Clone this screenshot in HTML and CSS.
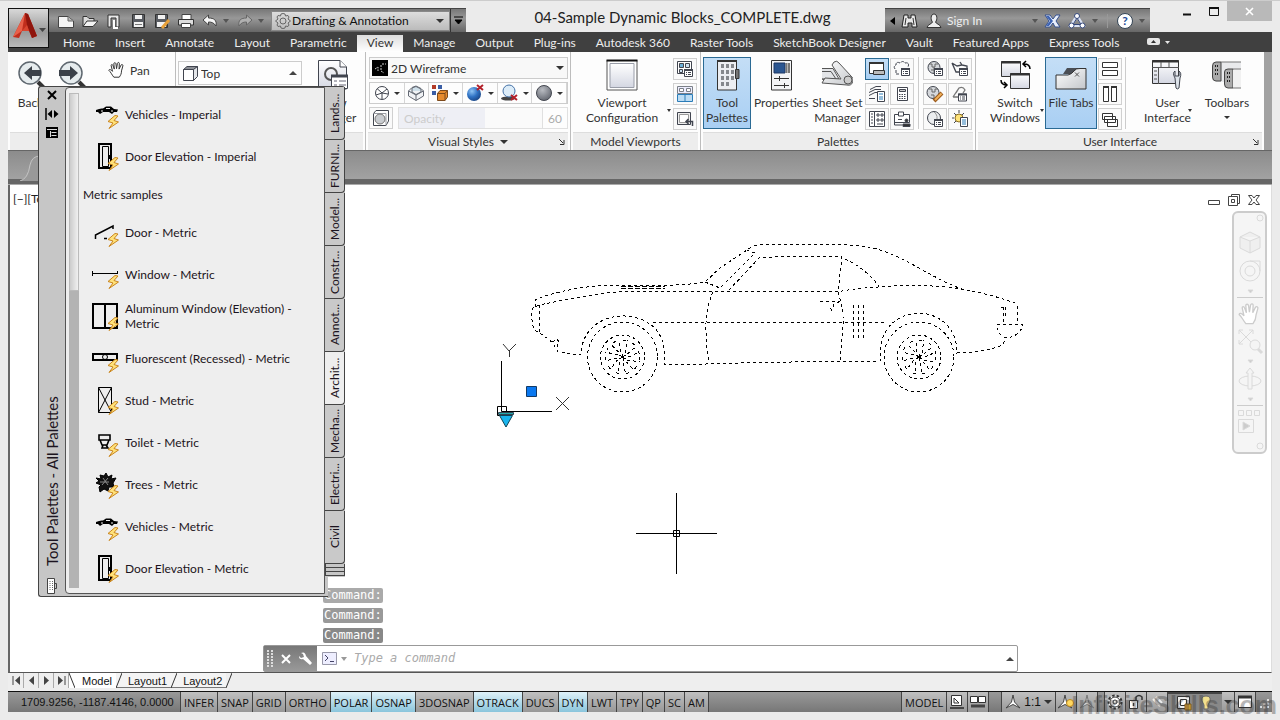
FILE: index.html
```html
<!DOCTYPE html>
<html lang="en">
<head>
<meta charset="utf-8">
<title>04-Sample Dynamic Blocks_COMPLETE.dwg</title>
<link rel="stylesheet" href="styles.css">
</head>
<body>
<svg class="defs" aria-hidden="true">
  <defs>
    <linearGradient id="steel" x1="0" y1="0" x2="1" y2="1"><stop offset="0" stop-color="#fff"/><stop offset="1" stop-color="#c3c6ca"/></linearGradient>
    <linearGradient id="pane" x1="0" y1="0" x2="0" y2="1"><stop offset="0" stop-color="#fff"/><stop offset="1" stop-color="#d4d7e2"/></linearGradient>
    <radialGradient id="blueball" cx=".35" cy=".3" r=".8"><stop offset="0" stop-color="#8fc4f5"/><stop offset=".5" stop-color="#2f72c4"/><stop offset="1" stop-color="#173f7d"/></radialGradient>
    <radialGradient id="grayball" cx=".4" cy=".3" r=".8"><stop offset="0" stop-color="#b9bcc2"/><stop offset="1" stop-color="#5b5f68"/></radialGradient>
    <symbol id="bolt" viewBox="0 0 12 14"><path d="M8 .5 1 6.500 6 8 2 13.500 11.500 7 7 5.500 11 1Z" fill="#ffe27a" stroke="#c9841c"/></symbol>
    <symbol id="car" viewBox="0 0 28 30"><path d="M5 11Q9 9 12 9.500L15 7.500H20L23 10 27 10.500 26 13H23L21 15 18 13H12L9 15 7 13H5Z" fill="#000"/><path d="M15 9.500h4M10 12h2M20 12h2" stroke="#eee"/></symbol>
    <symbol id="door" viewBox="0 0 28 30"><path d="M8 3H20V27H8Z" fill="none" stroke="#000" stroke-width="2"/><path d="M11.500 5.500H17.500V25.500H11.500Z" fill="none" stroke="#000"/><path d="M19 14v4" stroke="#000" stroke-width="2"/></symbol>
    <symbol id="list" viewBox="0 0 9 8"><path d="M.5.5H8.500V7.500H.5Z" fill="#fff" stroke="#41454f"/><path d="M0 1h9" stroke="#41454f" stroke-width="2"/><path d="M2 3.500h1M4 3.500h3M2 5.500h1M4 5.500h3" stroke="#41454f"/></symbol>
    <symbol id="hand" viewBox="0 0 20 20"><path d="M6.500 18C4 15 3 12 1 10.500 1 9 3 9 5 11.500L3.500 5C3.500 3.500 5 3.500 5.500 5L7 9 6.500 3C6.500 1.500 8.500 1.500 8.800 3L9.500 8.500 10.500 2.500C11 1 12.800 1.500 12.600 3L12.300 9 14.500 4.500C15.300 3.300 17 4 16.500 5.500L15 11C15 14 14 16 12.500 18Z" fill="#fff" stroke="currentColor" stroke-width="1.100"/></symbol>
  </defs>
</svg>
<div class="app">
  <header class="top">
    <button class="app-menu" aria-label="Application menu">
      <svg width="34" height="34" viewBox="0 0 34 34"><path d="M12 2 0 26 6 27 9 20H16L19 27 24 25 15 3Z" fill="#c12d1c"/><path d="M12 2 9 20 0 26Z" fill="#e8604a"/><path d="M12 2 15 3 24 25 19 27 14 14Z" fill="#8f150d"/><path d="M9 20H16L14 14Z" fill="#d84630"/><path d="M26 17h7l-3.500 4Z" fill="#444"/></svg>
    </button>
    <div class="title-row">
      <div class="qat">
        <button aria-label="New"><svg width="18" height="18"><path d="M1.500 4.500H11L16.500 9V15.500H1.500Z" fill="#f4f4f4" stroke="#444"/><path d="M11 4.500V9H16" fill="#bbb" stroke="#666"/></svg></button>
        <button aria-label="Open"><svg width="18" height="18"><path d="M2 14.500V4.500H6L8 6.500H13V9" fill="#ddd" stroke="#333"/><path d="M2 14.500 6 9H17L12 14.500Z" fill="#f3f3f3" stroke="#333"/></svg></button>
        <button aria-label="Recover"><svg width="18" height="18"><path d="M3 15V3H14V15H11V6H6V15Z" fill="#e8e8e8" stroke="#333"/><path d="M9 8v8h4" stroke="#fff" stroke-width="2" fill="none"/></svg></button>
        <button aria-label="Save"><svg width="18" height="18"><path d="M3.500 2.500H15.500V15.500H3.500Z" fill="#5a5d63" stroke="#333"/><path d="M6 3h7v4H6ZM5 10h9v5H5Z" fill="#f2f2f2"/><path d="M6 12.500h7" stroke="#777"/></svg></button>
        <button aria-label="Save as"><svg width="18" height="18"><path d="M2.500 2.500H14.500V15.500H2.500Z" fill="#5a5d63" stroke="#333"/><path d="M5 3h7v4H5ZM4 10h9v5H4Z" fill="#f2f2f2"/><path d="M9 16 16 8" stroke="#e8a13a" stroke-width="3"/></svg></button>
        <button aria-label="Plot"><svg width="18" height="18"><path d="M5 2.500H14V8H5Z" fill="#fff" stroke="#444"/><path d="M1.500 7.500H16.500V13H1.500Z" fill="#ddd" stroke="#333"/><path d="M4.500 11.500H13.500V15.500H4.500Z" fill="#fff" stroke="#444"/></svg></button>
        <button aria-label="Undo"><svg width="18" height="18"><path d="M2 8 7.500 3V6C13 6 16 8 15 14 13 11 11 10 7.500 10V13Z" fill="#f5f5f5" stroke="#444"/></svg></button><i class="tri dim"></i>
        <button aria-label="Redo"><svg width="18" height="18"><path d="M16 8 10.500 3V6C5 6 2 8 3 14 5 11 7 10 10.500 10V13Z" fill="#b0b0b0" stroke="#666"/></svg></button><i class="tri dim"></i>
        <label class="workspace"><svg width="18" height="18" fill="none" stroke="#666"><path d="M9 1.500 11 2 11.500 4 14 3.500 15 5 14 7 16.500 9 14 11 15 13 14 14.500 11.500 14 11 16 9 16.500 7 16 6.500 14 4 14.500 3 13 4 11 1.500 9 4 7 3 5 4 3.500 6.500 4 7 2Z"/><circle cx="9" cy="9" r="3"/></svg>
          <select aria-label="Workspace"><option>Drafting &amp; Annotation</option></select><i class="tri"></i></label>
        <button class="qat-more" aria-label="Customize"><svg width="9" height="9"><path d="M0 1h9M1 4h7L4.500 8Z" stroke="#000" fill="#000"/></svg></button>
      </div>
      <h1 class="title">04-Sample Dynamic Blocks_COMPLETE.dwg</h1>
      <div class="infobar">
        <svg width="5" height="8"><path d="M5 0V8L0 4Z"/></svg>
        <button aria-label="Search"><svg width="18" height="18"><path d="M3 3h4v3h3V3h4l2 12h-5v-4H7v4H1Z" fill="#e8e8e8" stroke="#222"/><path d="M5 6 4 13M12 6l1 7" stroke="#333"/></svg></button>
        <button class="signin"><svg width="18" height="18"><path d="M9 2C5.500 2 5.500 8 7.500 10 7 12 3 12 2 15.500H16C15 12 11 12 10.500 10 12.500 8 12.500 2 9 2Z" fill="#eee" stroke="#333"/></svg><span>Sign In</span></button>
        <i class="tri dim"></i>
        <button aria-label="Exchange"><svg width="18" height="16"><path d="M1 2H6L9 6 12 2H16L12 8 16 14H11L9 10 6 14H1L5 8Z" fill="#e9effa" stroke="#35508e"/><path d="M2 3h3l4 5-4 5H2l4-5Z" fill="#3d63b4"/></svg></button>
        <button aria-label="Autodesk 360"><svg width="18" height="16" fill="none" stroke="#34477a"><path d="M9 3 3 12.500H15Z" stroke="#dbe3f4" stroke-width="3"/><path d="M9 5 5 11.500H13Z"/><circle cx="9" cy="3" r="2.500" fill="#fff"/><circle cx="3.500" cy="12.500" r="2.500" fill="#fff"/><circle cx="14.500" cy="12.500" r="2.500" fill="#fff"/></svg></button><i class="tri dim"></i>
        <span class="bar"></span>
        <button class="help" aria-label="Help">?</button><i class="tri dim"></i>
      </div>
      <div class="winbtns">
        <button aria-label="Minimize"><svg width="10" height="12"><path d="M1 9.500h8" stroke="#111" stroke-width="2"/></svg></button>
        <button aria-label="Maximize"><svg width="12" height="12"><path d="M1 2.500H10.500V10.500H1.500V2" fill="none" stroke="#111"/><path d="M1 3h10" stroke="#111" stroke-width="2"/></svg></button>
        <button class="close" aria-label="Close"><svg width="9" height="9"><path d="M1 1 8 8M8 1 1 8" stroke="#fff" stroke-width="1.600"/></svg></button>
      </div>
    </div>
    <nav class="tabs">
      <a href="#">Home</a><a href="#">Insert</a><a href="#">Annotate</a><a href="#">Layout</a><a href="#">Parametric</a><a href="#" class="on">View</a><a href="#">Manage</a><a href="#">Output</a><a href="#">Plug-ins</a><a href="#">Autodesk 360</a><a href="#">Raster Tools</a><a href="#">SketchBook Designer</a><a href="#">Vault</a><a href="#">Featured Apps</a><a href="#">Express Tools</a>
      <button class="ribbon-min" aria-label="Minimize ribbon"><svg width="23" height="8"><rect width="13" height="7" rx="2" fill="#e6e6e6"/><path d="M4 5h5L6.500 2Z" fill="#333"/><path d="M18 3h5l-2.500 3Z" fill="#e6e6e6"/></svg></button>
    </nav>
  </header>

  <section class="ribbon">
    <div class="panel p-nav">
      <div class="content">
        <button class="big"><svg width="32" height="32"><circle cx="15" cy="14" r="11" fill="#e6ecee" stroke="#5f6870" stroke-width="1.500"/><path d="M23 23l7 7" stroke="#333" stroke-width="4"/><path d="M9 14l8-7v4h9v6h-9v4Z" fill="#3b4149"/></svg><span>Back</span></button>
        <button class="big"><svg width="32" height="32"><circle cx="15" cy="14" r="11" fill="#e6ecee" stroke="#5f6870" stroke-width="1.500"/><path d="M23 23l7 7" stroke="#333" stroke-width="4"/><path d="M22 14l-8-7v4H3v6h11v4Z" fill="#3b4149"/></svg><span>Forward</span></button>
        <button class="pan"><svg width="18" height="18"><use href="#hand"/></svg>Pan</button>
      </div>
      <div class="caption">Navigate 2D</div>
    </div>
    <div class="panel p-views">
      <div class="content">
        <label class="viewlist"><svg width="18" height="18" fill="#fff" stroke="#41454f"><path d="M2.500 5.500H12.500V16.500H2.500Z"/><path d="M2.500 5.500 6 2.500H16.500L12.500 5.500Z" fill="#8d9096"/><path d="M12.500 5.500 16.500 2.500V12.500L12.500 16.500Z" fill="#e3e5e8"/></svg>
          <select aria-label="View"><option>Top</option></select><i class="tri up"></i></label>
        <button class="big viewmgr"><svg width="32" height="32"><path d="M1.500 1.500H23L29.500 8V30H1.500Z" fill="url(#pane)" stroke="#41454f"/><path d="M23 1.500V8H29.500" fill="#fff" stroke="#41454f"/><circle cx="14" cy="15" r="6" fill="none" stroke="#555" stroke-width="2"/><path d="M14.500 16.500H30.500V29.500H14.500Z" fill="#fff" stroke="#41454f"/><path d="M14 17h17" stroke="#41454f" stroke-width="3"/><path d="M17 22h3M22 22h7M17 26h3M22 26h7" stroke="#667"/></svg><span>View<br>Manager</span></button>
      </div>
      <div class="caption">Views</div>
    </div>
    <div class="panel p-styles">
      <div class="content stack">
        <label class="combo"><svg width="16" height="16"><path d="M0 0h16v16H0Z"/><path d="M3 9l3-2v4M10 4h4M9 5v6l3 2" stroke="#ccc" fill="none" stroke-dasharray="2 1"/></svg>
          <select aria-label="Visual style"><option>2D Wireframe</option></select><i class="tri"></i></label>
        <div class="tools">
          <button class="dd" aria-label="Edges"><svg width="16" height="16" fill="none" stroke="#41454f"><circle cx="8" cy="8" r="6.500" fill="#fff"/><path d="M8 8 3 3.500M8 8 13 4M8 8V14M8 8 14 9M8 8 2 10"/></svg><i class="tri"></i></button>
          <button aria-label="X-ray"><svg width="18" height="18"><path d="M1.500 7 5 3.500 9 2 14 4.500 16.500 7V12L9 16.500 1.500 12Z" fill="#f0f2f5" stroke="#656a74"/><path d="M1.500 7 9 11 16.500 7M9 11v5.500M5 7V4L9 2.500 14 5V8L9 10.500 5 8Z" fill="#cfe0ea" stroke="#656a74"/></svg></button>
          <button class="dd" aria-label="Materials"><svg width="18" height="18"><path d="M1 1h4v4H1Z" fill="#b33b28"/><path d="M7 1h4v4H7Z" fill="#3b5ea5"/><path d="M1 7h4v4H1Z" fill="#3b5ea5"/><path d="M6.500 9.500 9 6.500H16.500V13L14 16.500H6.500Z" fill="#e78b2e" stroke="#7d4a1c"/><path d="M14 16.500V9.500H6.500M14 9.500 16.500 6.500" stroke="#7d4a1c" fill="none"/></svg><i class="tri"></i></button>
          <button class="dd" aria-label="Lighting"><svg width="18" height="18"><circle cx="8" cy="10" r="7" fill="url(#blueball)"/><path d="M11 1l6 5M17 1l-6 5" stroke="#b3202a" stroke-width="2"/></svg><i class="tri"></i></button>
          <button class="dd" aria-label="Shadows"><svg width="18" height="18"><ellipse cx="7" cy="14.500" rx="7" ry="2" fill="#444"/><circle cx="8" cy="7" r="6" fill="#dcecf8" stroke="#4572a8"/><path d="M10 11l6 5M16 11l-6 5" stroke="#b3202a" stroke-width="2"/></svg><i class="tri"></i></button>
          <button class="dd" aria-label="Face style"><svg width="18" height="18"><circle cx="9" cy="9" r="7.500" fill="url(#grayball)" stroke="#454851"/></svg><i class="tri"></i></button>
        </div>
        <div class="opacity">
          <button class="sq" aria-label="X-ray faces"><svg width="18" height="18"><path d="M1.500 4.500 4 1.500H16.500V12L14 16.500H1.500Z" fill="#fff" stroke="#41454f"/><path d="M1.500 4.500H14V16.500" fill="none" stroke="#9a9da4"/><circle cx="8" cy="10" r="5" fill="#c9ccd0" stroke="#777"/></svg></button>
          <label class="slider"><span>Opacity</span><input type="range" value="60" disabled></label>
          <input class="num" type="text" value="60" aria-label="Opacity value" disabled>
        </div>
      </div>
      <div class="caption">Visual Styles <i class="tri"></i><svg class="launch" width="6" height="6"><path d="M0 0 4 4M5 1V5.500H1" stroke="#333" fill="none"/></svg></div>
    </div>
    <div class="panel p-vports">
      <div class="content">
        <button class="big w96"><svg width="32" height="32"><path d="M1 1.500H31V31H1Z" fill="#fff" stroke="#555"/><path d="M.5 1.500h31" stroke="#111" stroke-width="2"/><path d="M4 4.500H28V28.500H4Z" fill="url(#pane)" stroke="#999da8"/></svg><span>Viewport<br>Configuration</span><i class="tri corner"></i></button>
        <div class="col3">
          <button class="sq" aria-label="Named"><svg width="18" height="18" fill="#cfe3f2" stroke="#41454f"><path d="M1.500 1.500H15.500V13.500H1.500Z" fill="#fff"/><path d="M3.500 3.500H7.500V7.500H3.500Z" fill="#6bb0d8"/><path d="M9.500 3.500H13.500V7.500H9.500ZM3.500 9.500H6.500V12.500H3.500Z"/><use href="#list" x="8" y="9" width="9" height="8"/></svg></button>
          <button class="sq" aria-label="Join"><svg width="18" height="18" fill="#bcdcf3" stroke="#7b8088"><path d="M1.500 1.500H16.500V8.500H1.500Z" fill="#eef"/><path d="M3.500 3.500H7.500V6.500H3.500ZM10.500 3.500H14.500V6.500H10.500Z" fill="#fff"/><path d="M1.500 9.500H16.500V16.500H1.500Z" stroke="#2b7cb8"/><path d="M9 9v8" stroke="#2b7cb8"/></svg></button>
          <button class="sq" aria-label="Restore"><svg width="18" height="18" fill="#eee" stroke="#41454f"><path d="M1.500 2.500H14.500V14.500H1.500Z"/><path d="M3.500 4.500H12.500V12.500H3.500Z" fill="#fff" stroke="#999"/><path d="M16.500 16V11.500H10M12.500 9 10 11.500 12.500 14" fill="none" stroke-width="1.500"/></svg></button>
        </div>
      </div>
      <div class="caption">Model Viewports</div>
    </div>
    <div class="panel p-palettes">
      <div class="content">
        <button class="big on"><svg width="32" height="32"><path d="M6.500 1.500H25.500V31H6.500Z" fill="#eceef2" stroke="#333"/><path d="M6 2h20" stroke="#333" stroke-width="2"/><path d="M24.500 10.500H28V19.500H24.500Z" fill="#777" stroke="#333"/><path d="M10 5h3v4h-3zM15 5h3v4h-3zM20 5h3v4h-3zM10 11h3v4h-3zM15 11h3v4h-3zM20 11h3v4h-3zM10 17h3v4h-3zM15 17h3v4h-3zM20 17h3v4h-3zM10 23h3v4h-3zM15 23h3v4h-3z" fill="#85888d"/></svg><span>Tool<br>Palettes</span></button>
        <button class="big"><svg width="32" height="32"><path d="M6.500 1.500H26.500V31H6.500Z" fill="#f3f4f6" stroke="#333"/><path d="M9 4h11v10H9Z" fill="#2b5691" stroke="#1c3765"/><path d="M21.500 4v10M24 4v10" stroke="#777" stroke-width="2"/><path d="M9 19.500h15M9 26.500h15M14.500 17v5M19.500 24v5" stroke="#333"/></svg><span>Properties</span></button>
        <button class="big sheets"><svg width="32" height="32"><path d="M1 9.500H12L18 20H1M1 12.500H10L15 20M1 20 16 24" fill="#e3e5e8" stroke="#555"/><path d="M13 3Q16 1 18 4L30 17A5 5 0 0 1 26 26L1 24 4 19 20 20 11 6Z" fill="url(#steel)" stroke="#555"/><circle cx="27" cy="21" r="4" fill="#ccc" stroke="#555"/></svg><span>Sheet Set<br>Manager</span></button>
        <div class="col3 two">
          <button class="sq on" aria-label="Command line"><svg width="18" height="18" fill="#fff" stroke="#333"><path d="M1.500 2.500H15.500V13.500H1.500Z"/><path d="M1 3h15" stroke-width="2"/><path d="M5.500 10.500H16.500V14.500H5.500Z" fill="#bbb"/></svg></button>
          <button class="sq" aria-label="Markup"><svg width="18" height="18" fill="none" stroke="#41454f"><path d="M2 9Q0 6 3 5 3 1 7 3 10 0 12 3 17 2 15 7M3 10v4h4" stroke-dasharray="3 1"/><use href="#list" x="8" y="8" width="9" height="8"/></svg></button>
          <button class="sq" aria-label="Layers"><svg width="18" height="18" fill="#fff" stroke="#41454f"><path d="M1 10.500 7 7.500H13M1 7.500 7 4.500H13M1 13.500H7M2 4.500 8 1.500H13" fill="none"/><path d="M9.500 6.500H16.500V16.500H9.500Z"/><path d="M11 9h4M11 12h4M11 14h4" stroke="#2b7cb8"/></svg></button>
          <button class="sq" aria-label="Calculator"><svg width="18" height="18" fill="#fff" stroke="#41454f"><path d="M4.500 2.500H14.500V15.500H4.500Z"/><path d="M6.500 4.500H12.500V6.500H6.500Z" fill="#ccc"/><path d="M6 9.500h7M6 11.500h7M6 13.500h7" stroke-dasharray="1.500 1"/></svg></button>
          <button class="sq" aria-label="DesignCenter"><svg width="18" height="18" fill="#fff" stroke="#41454f"><path d="M1.500 1.500H6.500V16.500H1.500ZM6.500 1.500H16.500V16.500H6.500Z"/><path d="M9 4h2v2H9ZM13 4h2v2h-2ZM9 9h2v2H9ZM13 9h2v2h-2Z"/><path d="M3 4h2M3 7h2M3 10h2M3 13h2M9 14h6"/></svg></button>
          <button class="sq" aria-label="Share"><svg width="18" height="18" fill="#fff" stroke="#41454f"><path d="M1.500 4.500H16.500V12.500H1.500Z"/><path d="M5.500 4V2H10.500V6H5.500ZM5 9.500h4" /><path d="M1.500 9v6h8" fill="none"/><circle cx="13.500" cy="10.500" r="1.500" fill="#333"/><path d="M10 16.500V14h7v2.500Z" fill="#333"/></svg></button>
        </div>
        <span class="sep"></span>
        <div class="col3 two">
          <button class="sq" aria-label="Materials browser"><svg width="18" height="18"><circle cx="8" cy="7.500" r="6" fill="#d5d8dc" stroke="#41454f"/><path d="M3 4h3v3h3V4h3M5 10h3v3M8 7v3h4" stroke="#666" fill="none"/><use href="#list" x="8" y="8" width="9" height="8"/></svg></button>
          <button class="sq" aria-label="Light glyph"><svg width="18" height="18"><path d="M1 3 5 12H9M1 3l5 3 5-1L9 2M11 5l5 1v3" fill="none" stroke="#41454f" stroke-width="1.300"/><use href="#list" x="8" y="8" width="9" height="8"/></svg></button>
          <button class="sq" aria-label="Materials editor"><svg width="18" height="18"><circle cx="7" cy="7.500" r="6" fill="#d5d8dc" stroke="#41454f"/><path d="M3 4h3v3h3V4h3M5 10h3v3" stroke="#666" fill="none"/><path d="M8 16 16 8" stroke="#9c5b1d" stroke-width="4"/><path d="M9 15 15.500 8.500" stroke="#f0b05a" stroke-width="2"/></svg></button>
          <button class="sq" aria-label="Visual styles manager"><svg width="18" height="18"><path d="M2 12 8 3Q12 1 14 5L12 8M2 12h5M8 3 5 8" fill="none" stroke="#777" stroke-width="1.300"/><use href="#list" x="7" y="8" width="9" height="9"/></svg></button>
          <button class="sq" aria-label="Render settings"><svg width="18" height="18"><circle cx="8" cy="8" r="6.500" fill="#eceef0" stroke="#41454f"/><path d="M8 2Q13 5 10 14" fill="none" stroke="#999"/><use href="#list" x="8" y="9" width="9" height="8"/></svg></button>
          <button class="sq" aria-label="Sun properties"><svg width="18" height="18"><circle cx="8" cy="8" r="4" fill="#ffe47a" stroke="#8a6d20"/><path d="M1 8h2M8 0v3M3 3l2 2M13 3l-2 2M3 13l2-2" stroke="#41454f"/><path d="M9.500 7.500H16.500V16.500H9.500Z" fill="#fff" stroke="#41454f"/><path d="M11 10h4M11 12h4M11 14h4" stroke="#2b7cb8"/></svg></button>
        </div>
      </div>
      <div class="caption">Palettes</div>
    </div>
    <div class="panel p-ui">
      <div class="content">
        <button class="big switch"><svg width="32" height="32"><path d="M2.500 2.500H21.500V17.500H2.500Z" fill="url(#pane)" stroke="#333"/><path d="M2 3.500h20" stroke="#333" stroke-width="2"/><path d="M11.500 14.500H30.500V29.500H11.500Z" fill="url(#pane)" stroke="#333"/><path d="M11 15.500h20" stroke="#333" stroke-width="2"/><path d="M31 10Q31 5 25 5M27 2 24 5 27 8M2 21Q2 26 8 26M5 23 8 26 5 29" fill="none" stroke="#000" stroke-width="1.500"/></svg><span>Switch<br>Windows</span><i class="tri corner"></i></button>
        <button class="big on files"><svg width="32" height="32"><path d="M8 15 12 9H31V15H8Z" fill="#4a4e55"/><path d="M1 30V16H13Q17 15 19 12T25 9.500H31V30Z" fill="url(#steel)" stroke="#333"/><path d="M20 13.500l4 4M24 13.500l-4 4" stroke="#555"/></svg><span>File Tabs</span></button>
        <div class="col3">
          <button class="sq" aria-label="Tile horizontally"><svg width="18" height="18" fill="#fff" stroke="#333"><path d="M1.500 2.500H16.500V7.500H1.500ZM1.500 10.500H16.500V15.500H1.500Z"/></svg></button>
          <button class="sq" aria-label="Tile vertically"><svg width="18" height="18" fill="#fff" stroke="#333"><path d="M2.500 1.500H7.500V16.500H2.500ZM10.500 1.500H15.500V16.500H10.500Z"/><path d="M2 2h6M10 2h6" stroke-width="2"/></svg></button>
          <button class="sq" aria-label="Cascade"><svg width="18" height="18" fill="#fff" stroke="#333"><path d="M1.500 3.500H11.500V9.500H1.500ZM3.500 6.500H14.500V12.500H3.500ZM6.500 9.500H16.500V16.500H6.500Z"/></svg></button>
        </div>
        <span class="sep"></span>
        <button class="big gap"><svg width="32" height="32"><path d="M1.500 1.500H27.500V24.500H1.500Z" fill="url(#pane)" stroke="#333"/><path d="M1 2.500h27" stroke="#333" stroke-width="2"/><path d="M1 8.500h27M7.500 9v16M10 3v5M18 3v5M3 12h3M3 16h3M3 20h3" stroke="#555"/><path d="M24 12v5h4v-5Q31 14 29 19L28 29Q26 31 25 29L24 19Q21 14 24 12Z" fill="#dde3ea" stroke="#41454f"/></svg><span>User<br>Interface</span><i class="tri corner"></i></button>
        <button class="big"><svg width="32" height="32"><path d="M2 6Q2 3 6 3H30V23H6Q2 23 2 19Z" fill="#e9eaec"/><path d="M10 3H5Q1.500 3 1.500 7V18Q1.500 22 5 22H10Z" fill="#aaa" stroke="#444"/><path d="M10 3h20" stroke="#777"/><path d="M4 7h4M4 11h4M4 15h4" stroke="#222" stroke-width="2" stroke-dasharray="1 1"/><path d="M22 10H17Q13.500 10 13.500 13V25Q13.500 29 17 29H22Z" fill="#aaa" stroke="#444"/><path d="M22 10.500H30V29H22Z" fill="#f1f1f1"/><path d="M22 10h8M22 29h8" stroke="#777"/><path d="M16 14h4M16 18h4M16 22h4" stroke="#222" stroke-width="2" stroke-dasharray="1 1"/></svg><span>Toolbars</span><i class="tri below"></i></button>
      </div>
      <div class="caption">User Interface<svg class="launch" width="6" height="6"><path d="M0 0 4 4M5 1V5.500H1" stroke="#333" fill="none"/></svg></div>
    </div>
  </section>
  <div class="filetabs"><svg width="40" height="26"><path d="M12 26Q20 24 22 10 24 1 32 1H40V26Z" fill="#999"/><path d="M12 26Q20 24 22 10 24 1 32 1H40" fill="none" stroke="#c4c4c4"/></svg></div>

  <main class="canvas">
    <span class="vplabel">[−][Top]</span>
    <div class="docbtns">
      <button aria-label="Minimize drawing"><svg width="14" height="14"><path d="M1.500 7.500H12.500V11.500H1.500Z" fill="#fff" stroke="#444"/></svg></button>
      <button aria-label="Restore drawing"><svg width="14" height="14" fill="#fff" stroke="#444"><path d="M4.500 1.500H12.500V10.500H4.500Z"/><path d="M1.500 3.500H10.500V12.500H1.500Z"/><path d="M4.500 6.500H7.500V9.500H4.500Z"/></svg></button>
      <button aria-label="Close drawing"><svg width="14" height="14"><path d="M1.500 2.500H5L7 5 9 2.500H12.500L9 7 12.500 11.500H9L7 9 5 11.500H1.500L5 7Z" fill="#fff" stroke="#444"/></svg></button>
    </div>
    <svg class="drawing" viewBox="490 230 560 350" width="560" height="350" fill="none" stroke="#000">
      <defs>
        <g id="wheel"><circle r="35"/><circle r="22"/><circle r="17" stroke-dasharray="3 7"/>
          <path d="M-2-5-3-17M3-4 5-17M5-3 13-10M6 0 17-5M5 3 17 5M4 5 11 13M1 6 3 17M-3 5-4 17M-5 3-12 12M-6 1-17 4M-5-2-17-5M-4-5-11-12" stroke-dasharray="3 3"/><path d="M-3-2 3 2M-3 2 3-2M0-3 1 4" stroke-dasharray="none"/></g>
      </defs>
      <g stroke-dasharray="3 3" shape-rendering="crispEdges">
        <path d="M535 307V300Q557 290 600 285.500H657Q690 285 705 282L720 268 747 250Q753 245 762 244.500H823Q850 244 867 247 885 249 917 267T962 289"/>
        <path d="M621 286.500H665M621 288.500H665" stroke-dasharray="5 2"/>
        <path d="M539 332V305Q567 299 603 293.500 615 291.500 630 291.500H840Q850 289 878 287 910 284 947 287 985 292 1015 303L1017 306V324"/>
        <path d="M539 305 533 308Q530 314 534 330L540 333 552 342 558 352 581 355C582 304 660 304 664 349V364H706Q760 362 880 361V353C881 300 957 300 957 353Q985 352 1000 346 1006 342 1005 338"/>
        <path d="M552 342l5-3 2 3-2 5h-3"/>
        <path d="M997 324H1022V328Q1016 338 1005 338 997 334 997 324M1001 307H1006M1003.500 307V322M1005.500 307V316"/>
        <path d="M653 322.500H887M713 292Q705 310 706 333T710 363"/>
        <path d="M705 282 720 288 755 253 747 250M729 290 759 258 780 256.500H825L842 257 838 292Q844 310 843 325T840 363"/>
        <path d="M845 259Q865 268 879 286M820 301H833L836 303 841 301M830 308l4 5M833 307l1-4"/>
        <path d="M853.500 305V340M858.500 305V340M863.500 305V340"/>
        <use href="#wheel" x="622.500" y="357"/><use href="#wheel" x="919" y="357"/>
      </g>
      <path d="M501.500 361V411.500H552M497.500 406.500H506.500V415.500H497.500Z"/>
      <path d="M503 344 509 351 516 344M509.500 351V357M556 397 569 410M569 397 556 410" stroke="#333"/>
      <path d="M526.500 386.500H536.500V396.500H526.500Z" fill="#0a78f0" stroke="#123a66"/>
      <path d="M498.500 412.500H513.500V414.500H498.500Z" fill="#2aa" stroke="#345"/><path d="M499.500 415.500H512.500L506 427Z" fill="#19b5ee" stroke="#145"/>
      <path d="M636 533.500H717M676.500 493V574"/><path d="M673.500 530.500H679.500V536.500H673.500Z"/>
    </svg>
    <div class="navbar">
      <svg width="34" height="242" fill="none" stroke="#dadada"><circle cx="26" cy="5" r="3"/><path d="M6 24 16 19 26 24V35L16 40 6 35ZM6 24 16 28 26 24M16 28V40" fill="#efefef"/><circle cx="16" cy="58" r="10"/><circle cx="16" cy="58" r="5"/><path d="M26 58V48H16"/><path d="M14 77h5l-2.500 3Z" fill="#ccc"/><path d="M3 84.500H29M3 192.500H29" stroke="#ccc"/><path d="M5 117 19 131M19 117 5 131M5 121V117H9M15 117H19V121M5 127V131H9"/><circle cx="21" cy="132" r="5" fill="#f4f4f4"/><path d="M24 136l4 4" stroke-width="3"/><path d="M14 147h5l-2.500 3Z" fill="#ccc"/><ellipse cx="16" cy="168" rx="11" ry="5"/><path d="M14 176V160H12L16 155 20 160H18V176Z" fill="#f4f4f4"/><path d="M14 185h5l-2.500 3Z" fill="#ccc"/><path d="M4.500 197.500h5v5h-5zM12.500 197.500h5v5h-5zM20.500 197.500h5v5h-5zM4.500 206.500H19.500V219.500H4.500Z"/><path d="M9 209V217L16 213Z" fill="#ccc"/><circle cx="26" cy="233" r="3"/></svg>
      <svg class="navhand" width="24" height="26"><use href="#hand"/></svg>
    </div>
    <div class="cmdarea">
      <div class="history"><span>Command:</span><span>Command:</span><span>Command:</span></div>
      <div class="cmdline">
        <div class="cmdtools"><svg width="6" height="18"><path d="M1 0V18M5 0V18" stroke="#ddd" stroke-width="2" stroke-dasharray="2 1"/></svg>
          <button aria-label="Close command line"><svg width="10" height="10"><path d="M1 1 9 9M9 1 1 9" stroke="#fff" stroke-width="2"/></svg></button>
          <button aria-label="Customize command line"><svg width="14" height="14"><path d="M1 4 3 6 6 5 5 2 3 1Q7-1 8 4L14 11 12 13 5 7Q1 8 1 4Z" fill="#fff"/></svg></button></div>
        <label class="cmdinput"><svg width="15" height="13"><path d="M.5.5H14.500V12.500H.5Z" fill="#eef" stroke="#99a"/><path d="M3 3 6 6 3 9M8 9.500h4" fill="none" stroke="#446"/></svg><i class="tri dim2"></i><input type="text" placeholder="Type a command" aria-label="Command"><i class="tri up"></i></label>
      </div>
    </div>
  </main>

  <nav class="layouts">
    <button aria-label="First"><svg width="9" height="9"><path d="M1 0V9" stroke="#444"/><path d="M8 0V9L3 4.500Z" fill="#444"/></svg></button>
    <button aria-label="Previous"><svg width="7" height="9"><path d="M6 0V9L1 4.500Z" fill="#444"/></svg></button>
    <button aria-label="Next"><svg width="7" height="9"><path d="M1 0V9L6 4.500Z" fill="#444"/></svg></button>
    <button aria-label="Last"><svg width="9" height="9"><path d="M8 0V9" stroke="#444"/><path d="M1 0V9L6 4.500Z" fill="#444"/></svg></button>
    <a href="#" class="on"><svg width="6" height="15"><path d="M0 0 6 15" stroke="#333"/></svg>Model</a><a href="#"><svg width="6" height="15"><path d="M6 0 0 15" stroke="#333"/></svg>Layout1</a><a href="#"><svg width="6" height="15"><path d="M6 0 0 15" stroke="#333"/></svg>Layout2</a><svg width="6" height="15"><path d="M6 0 0 15" stroke="#333"/></svg>
  </nav>
  <footer class="status">
    <span class="coords">1709.9256, -1187.4146, 0.0000</span>
    <div class="toggles">
      <button>INFER</button><button>SNAP</button><button>GRID</button><button>ORTHO</button><button class="on">POLAR</button><button class="on">OSNAP</button><button>3DOSNAP</button><button class="on">OTRACK</button><button>DUCS</button><button class="on">DYN</button><button>LWT</button><button>TPY</button><button>QP</button><button>SC</button><button>AM</button>
    </div>
    <div class="tray">
      <button>MODEL</button>
      <button aria-label="Model space"><svg width="16" height="16"><path d="M2.500 1.500H12.500V11.500H2.500Z" fill="#fff" stroke="#333"/><path d="M5 4v5h5Z" fill="none" stroke="#333"/><path d="M1 14h14" stroke="#444" stroke-width="2"/></svg></button>
      <button aria-label="Layouts"><svg width="16" height="16"><path d="M.5 2.500H7.500V8.500H.5ZM8.500 2.500H15.500V8.500H8.500Z" fill="#fff" stroke="#333"/><path d="M1 12h14" stroke="#444" stroke-width="3"/></svg></button>
      <button class="scale"><svg width="16" height="16"><path d="M8 1 9.500 8 15 14 8 10.500 1 14 6.500 8Z" fill="#fff" stroke="#444"/></svg>1:1<i class="tri"></i></button>
      <button aria-label="Annotation visibility"><svg width="16" height="16"><path d="M7 1 8.500 8 14 14 7 10.500 0 14 5.500 8Z" fill="#fff" stroke="#444"/><circle cx="12" cy="9" r="3.500" fill="#ffd860" stroke="#b98820"/></svg></button>
      <button aria-label="Auto scale"><svg width="16" height="16"><path d="M8 1 9.500 8 15 14 8 10.500 1 14 6.500 8Z" fill="#ccc" stroke="#777"/></svg></button>
      <button class="after" aria-label="Workspace switching"><svg width="16" height="16" fill="#fff" stroke="#333"><circle cx="8" cy="8" r="6.500" stroke-width="2" stroke-dasharray="2.500 2"/><circle cx="8" cy="8" r="5"/><circle cx="8" cy="8" r="2"/></svg></button>
      <button aria-label="Lock"><svg width="16" height="16" fill="#fff" stroke="#333"><path d="M1.500 6.500H9.500V14.500H1.500Z"/><path d="M8 6V3Q11 0 14 3V6M5.500 9v3" fill="none" stroke-width="1.500"/></svg></button>
      <button aria-label="Hardware acceleration"><svg width="16" height="16"><path d="M4 5l7 7M7 3l6 6" stroke="#eee" stroke-width="2"/></svg></button>
      <span class="trayset"><svg width="16" height="16"><path d="M1.500 1.500H13.500V13.500H1.500Z" fill="#eee" stroke="#333"/><path d="M4.500 4.500H10.500V10.500H4.500Z" fill="#fff" stroke="#333"/><path d="M9 9h6v6H9Z" fill="#e0a73a" stroke="#7a5a1c"/></svg><svg width="16" height="16"><path d="M8 1Q13 1 12 6L10 10V14H6V10L4 6Q3 1 8 1Z" fill="#f2e08e" stroke="#666"/></svg></span>
      <button class="narrow" aria-label="Tray menu"><i class="tri"></i></button>
      <button aria-label="Clean screen"><svg width="16" height="16"><path d="M1.500 2.500H14.500V13.500H1.500Z" fill="#fff" stroke="#333"/><path d="M1 3h14" stroke="#333" stroke-width="3"/></svg></button>
      <svg class="grip" width="12" height="12"><path d="M10 1v10M6.500 5v6M3 8v3" stroke="#ddd" stroke-width="2" stroke-dasharray="2 1.500"/></svg>
    </div>
  </footer>

  <aside class="palette">
    <div class="spine">
      <button aria-label="Close palette"><svg width="10" height="10"><path d="M1 1 9 9M9 1 1 9" stroke="#000" stroke-width="2"/></svg></button>
      <button aria-label="Auto-hide"><svg width="14" height="12"><path d="M1 0V12" stroke="#000" stroke-width="1.500"/><path d="M7 2V10L2.500 6ZM9 2V10L13.500 6Z"/></svg></button>
      <button aria-label="Properties"><svg width="12" height="12"><path d="M0 0H12V11H0Z"/><path d="M1 2.500h10M5.500 5.500h5M5.500 8.500h5M4.500 4v6" stroke="#ddd"/></svg></button>
      <span class="vert">Tool Palettes - All Palettes</span>
      <svg width="12" height="16"><path d="M1.500.5H8.500V15.500H1.500Z" fill="#fff" stroke="#444"/><path d="M8.500 5.500h2v5h-2" fill="none" stroke="#444"/><path d="M4 3v10M6.500 3v10" stroke="#666" stroke-dasharray="1 1"/></svg>
    </div>
    <div class="sheet">
      <div class="scroll"><div class="thumb"></div></div>
      <ul class="items">
        <li><span class="ic"><svg width="28" height="30"><use href="#car"/></svg><svg class="b" width="12" height="14"><use href="#bolt"/></svg></span>Vehicles - Imperial</li>
        <li><span class="ic"><svg width="28" height="30"><use href="#door"/></svg><svg class="b" width="12" height="14"><use href="#bolt"/></svg></span>Door Elevation - Imperial</li>
        <li class="head">Metric samples</li>
        <li><span class="ic"><svg width="28" height="30"><path d="M4.500 22V18L22 9V12M13 21.500h3" fill="none" stroke="#000" stroke-width="1.500"/></svg><svg class="b" width="12" height="14"><use href="#bolt"/></svg></span>Door - Metric</li>
        <li><span class="ic"><svg width="28" height="30"><path d="M1.500 12V17M1 14.500H26M26.500 12V15" stroke="#000"/></svg><svg class="b" width="12" height="14"><use href="#bolt"/></svg></span>Window - Metric</li>
        <li><span class="ic"><svg width="28" height="30"><path d="M2 3H26V27H2ZM14 3V27" fill="none" stroke="#000" stroke-width="2"/></svg><svg class="b" width="12" height="14"><use href="#bolt"/></svg></span>Aluminum Window (Elevation) - Metric</li>
        <li><span class="ic"><svg width="28" height="30"><path d="M2 11H26V17H2Z" fill="none" stroke="#000" stroke-width="2"/><circle cx="14" cy="14" r="2.500" fill="none" stroke="#000"/></svg><svg class="b" width="12" height="14"><use href="#bolt"/></svg></span>Fluorescent (Recessed) - Metric</li>
        <li><span class="ic"><svg width="28" height="30"><path d="M7.500 2.500H20.500V27.500H7.500ZL20.500 27.500M20.500 2.500 7.500 27.500" fill="none" stroke="#000"/></svg><svg class="b" width="12" height="14"><use href="#bolt"/></svg></span>Stud - Metric</li>
        <li><span class="ic"><svg width="28" height="30"><path d="M8 8H19V13H8ZM9 13 11 18H16L18 13M11 21H17L15 18H12Z" fill="none" stroke="#000" stroke-width="1.600"/></svg><svg class="b" width="12" height="14"><use href="#bolt"/></svg></span>Toilet - Metric</li>
        <li><span class="ic"><svg width="28" height="30"><path d="M5 9 10 10 9 6 13 7 15 4 17 8 21 6 20 10 25 9 22 14 23 18 18 18 17 22 13 20 9 23 8 18 10 16 5 14 8 12Z" fill="#111" stroke="#000"/><path d="M12 9l5 7M17 9l-6 7M9 13h9" stroke="#888"/></svg><svg class="b" width="12" height="14"><use href="#bolt"/></svg></span>Trees - Metric</li>
        <li><span class="ic"><svg width="28" height="30"><use href="#car"/></svg><svg class="b" width="12" height="14"><use href="#bolt"/></svg></span>Vehicles - Metric</li>
        <li><span class="ic"><svg width="28" height="30"><use href="#door"/></svg><svg class="b" width="12" height="14"><use href="#bolt"/></svg></span>Door Elevation - Metric</li>
      </ul>
    </div>
    <div class="vtabs">
      <button>Lands...</button><button>FURNI...</button><button>Model...</button><button>Constr...</button><button>Annot...</button><button class="on">Archit...</button><button>Mecha...</button><button>Electri...</button><button>Civil</button><i></i><i></i><i></i>
    </div>
  </aside>
  <div class="watermark">InfiniteSkills.com</div>
</div>
</body>
</html>
```
FILE: styles.css
```css
* { box-sizing: border-box; }
body { margin: 0; background: #ebebeb; color: #222; font: 12px/15px Lato, "Open Sans", sans-serif; overflow: hidden; }
button, select, input { font: inherit; color: inherit; border: 0; padding: 0; margin: 0; background: none; border-radius: 0; }
select, input { appearance: none; min-width: 0; outline: 0; }
button, label { display: flex; align-items: center; justify-content: center; }
a { color: inherit; text-decoration: none; }
svg { display: block; flex: none; }
.defs { position: absolute; width: 0; height: 0; }
.tri { flex: none; width: 0; height: 0; border: 4px solid transparent; border-bottom: 0; border-top: 4px solid #333; }
.tri.up { border: 4px solid transparent; border-top: 0; border-bottom: 4px solid #444; }
.tri.dim { border-top-color: #555; border-width: 4px 3px 0; }
.tri.dim2 { border-top-color: #999; border-width: 4px 3px 0; }

.app { position: relative; height: 100vh; min-height: 600px; padding: 0 8px 8px; display: flex; flex-direction: column; border-top: 1px solid #ccc; }

.top { display: grid; grid-template: 31px 20px / 41px minmax(0, 1fr); }
.app-menu { grid-area: 1 / 1 / 3 / 2; margin: 7px 0 4px; border: 1px solid #111; background: linear-gradient(#d8d8d8, #999 60%, #bbb); justify-content: flex-start; padding: 0 0 0 4px; z-index: 1; }
.title-row { grid-area: 1 / 2; display: flex; align-items: flex-end; }
.qat, .infobar { display: flex; align-items: center; height: 24px; background: linear-gradient(#777, #989898 40%, #666); border-top: 1px solid #444; }
.qat { padding-left: 8px; gap: 6px; flex: 0 0 417px; }
.qat .dim { margin: 0 1px 0 -2px; }
.workspace { height: 20px; flex: 1; background: linear-gradient(#ddd, #bbb); border: 1px solid #888; padding: 0 5px 0 2px; }
.workspace select { flex: 1; color: #111; }
.workspace + .qat-more { width: 16px; margin-left: -6px; height: 100%; border-left: 1px solid #333; }
.title { margin: 0; flex: 1; align-self: center; padding: 0 0 0 14px; font-size: 15px; line-height: 20px; font-weight: 400; text-align: center; color: #222; white-space: nowrap; }
.infobar { flex: 0 0 265px; padding: 0 5px; gap: 6px; color: #eee; }
.signin { gap: 4px; flex: 1; justify-content: flex-start; }
.bar { width: 1px; height: 14px; background: #999; margin: 0 3px; }
.help { width: 16px; height: 16px; border-radius: 50%; background: #fff; color: #234a96; font-weight: 700; border: 1px solid #345; }
.winbtns { display: flex; align-self: flex-start; flex: 0 0 122px; justify-content: flex-end; }
.winbtns button { width: 27px; height: 20px; }
.winbtns .close { width: 45px; background: #b9b9b9; }
.tabs { grid-area: 2 / 1 / 3 / 3; display: flex; background: #404040; padding-left: 45px; color: #eee; }
.tabs a { padding: 3px 10px 0; line-height: 16px; white-space: nowrap; }
.tabs .on { background: linear-gradient(#ddd, #fff); color: #333; margin-top: 3px; padding-top: 0; }
.ribbon-min { margin-left: 18px; }

.ribbon { display: flex; flex: 0 0 99px; background: #a2a2a2; padding-right: 8px; color: #333; border-bottom: 1px solid #666; }
.panel { display: flex; flex-direction: column; min-width: 0; background: #fdfdfd; border-right: 1px solid #bdbdbd; padding: 0 2px; }
.content { flex: 1; display: flex; align-items: flex-start; padding-top: 5px; gap: 2px; }
.caption { position: relative; display: flex; align-items: center; justify-content: center; gap: 6px; height: 18px; background: #ededed; border-top: 1px solid #ddd; }
.launch { position: absolute; right: 3px; bottom: 5px; }
.p-nav { flex: 0 0 168px; } .p-views { flex: 0 0 190px; } .p-styles { flex: 0 0 205px; }
.p-vports { flex: 0 0 130px; } .p-palettes { flex: 0 0 275px; } .p-ui { flex: 1; border: 0; }
.big { position: relative; flex: none; flex-direction: column; justify-content: flex-start; height: 72px; min-width: 48px; padding: 1px 0; text-align: center; border: 1px solid transparent; }
.big span { margin-top: 4px; white-space: nowrap; }
.big.w96 { width: 98px; }
.big.sheets { width: 52px; }
.big.files { width: 52px; }
.big.switch { width: 58px; }
.big.on, .sq.on { background: linear-gradient(#c4def6, #a9cff3); border: 1px solid #2a6a94; }
.tri.corner { position: absolute; right: -1px; bottom: 16px; border-width: 3px 2px 0; }
.tri.below { margin-top: 6px; border-width: 3px 3px 0; }
.p-nav .content { gap: 0; }
.p-nav .big { width: 41px; min-width: 0; }
.pan { gap: 4px; margin: 4px 0 0 16px; }
.viewlist { height: 24px; width: 124px; flex: none; border: 1px solid #ccc; padding: 0 4px 0 2px; gap: 2px; margin-top: 4px; }
.viewlist select, .combo select { flex: 1; }
.viewmgr { margin-left: 5px; }
.stack { flex-direction: column; gap: 3px; align-items: stretch; padding-left: 1px; }
.combo, .tools, .opacity { height: 22px; }
.combo { border: 1px solid #ccc; background: #f8f8f8; padding: 0 3px 0 2px; gap: 3px; }
.tools { display: flex; border: 1px solid #ccc; }
.tools button { flex: 24 1 0; border-right: 1px solid #d5d5d5; }
.tools .dd { flex-grow: 35; gap: 4px; }
.tools .tri { border-width: 3px 3px 0; }
.opacity { display: flex; gap: 5px; }
.sq { width: 24px; height: 22px; border: 1px solid #d0d0d0; background: #fafafa; flex: none; }
.slider { position: relative; flex: 1; border: 1px solid #e0e0e0; background: linear-gradient(90deg, #eeeff5 60%, #fafafa 60%); }
.slider span { position: absolute; left: 5px; color: #ccc; }
.slider input { width: 100%; height: 100%; opacity: 0; }
.num { width: 26px; margin-left: -6px; border: 1px solid #e0e0e0; text-align: center; color: #aaa; }
.col3 { display: grid; grid-template-columns: 24px; gap: 3px 0; padding-top: 1px; flex: none; }
.col3.two { grid-template-columns: 24px 24px; gap: 3px 1px; }
.sep { width: 1px; height: 72px; background: #ccc; margin: 0 2px; flex: none; }
.p-ui .content { padding-left: 8px; gap: 1px; }
.p-ui .gap { margin-left: 14px; margin-right: 10px; }

.filetabs { flex: 0 0 34px; background: linear-gradient(#8c8c8c, #a2a2a2 85%, #666 85%); border-bottom: 1px solid #aaa; padding-top: 4px; }
.canvas { position: relative; flex: 1; min-height: 0; background: #fff; border-left: 2px solid #666; border-bottom: 1px solid #555; border-right: 1px solid #ddd; }
.vplabel { display: block; padding: 6px 3px; }
.docbtns { position: absolute; right: 10px; top: 8px; display: flex; gap: 6px; }
.drawing { position: absolute; left: 480px; top: 45px; }
.navbar { position: absolute; right: 4px; top: 26px; border: 2px solid #ccc; border-radius: 6px; width: 35px; height: 243px; overflow: hidden; background: #f5f5f5; color: #ccc; }
.navhand { position: absolute; left: 4px; top: 88px; }
.cmdarea { position: absolute; left: 253px; right: 253px; bottom: 0; }
.history { display: flex; flex-direction: column; align-items: flex-start; gap: 5px; padding: 0 0 2px 60px; }
.history span { background: #999; color: #fff; border-radius: 2px; padding: 0 1px; font: 12px/15px "DejaVu Sans Mono", monospace; }
.history span:first-child { background: #aaa; } .history span:last-child { background: #888; }
.cmdline { display: flex; height: 27px; border: 1px solid #999; border-radius: 2px; background: #fff; }
.cmdtools { width: 53px; display: flex; align-items: center; justify-content: space-between; padding: 0 5px 0 3px; background: linear-gradient(#777, #999); }
.cmdinput { flex: 1; gap: 4px; padding: 0 3px 0 5px; }
.cmdinput input { flex: 1; margin-left: 3px; font: italic 12px/15px "DejaVu Sans Mono", monospace; }
.cmdinput input::placeholder { color: #aaa; opacity: 1; }

.layouts { display: flex; flex: 0 0 18px; background: #eee; padding-left: 1px; font-family: "Liberation Sans", sans-serif; font-size: 11px; color: #111; }
.layouts button { width: 15px; height: 15px; border-right: 1px solid #aaa; }
.layouts a { display: flex; gap: 6px; padding-right: 4px; height: 15px; line-height: 16px; background: #f4f4f4; border-bottom: 1px solid #777; }
.layouts .on { background: #fff; border: 0; gap: 7px; }

.status { display: flex; flex: 0 0 21px; background: linear-gradient(#999, #777); border-top: 1px solid #111; color: #111; font: 11px/15px "Open Sans", sans-serif; }
.coords { flex: 0 0 172px; padding: 3px 0 0 13px; font: 11px/15px "Liberation Sans", sans-serif; white-space: nowrap; }
.toggles, .tray { display: flex; }
.toggles { border-left: 1px solid #444; }
.status button { background: linear-gradient(#c0c0c0, #989898); border-right: 1px solid #444; padding: 0 3px; }
.status .on { background: linear-gradient(#dff1f8, #8ac5dc); }
.tray { margin-left: auto; border-left: 1px solid #444; }
.tray button[aria-label] { padding: 0 2px; }
.tray .scale { margin-left: 12px; gap: 3px; border-left: 1px solid #444; font: 12px/15px "Liberation Sans", sans-serif; padding: 0 3px; }
.tray .after { margin-left: 6px; border-left: 1px solid #444; }
.trayset { display: flex; align-items: center; gap: 6px; padding: 0 8px; border-top: 2px solid #444; background: #888; }
.grip { margin: 6px 2px 0; }

.palette { position: absolute; left: 38px; top: 85px; width: 307px; height: 511px; display: flex; border: 1px solid #444; border-right: 0; border-radius: 3px; background: #c6c6c6; color: #1c1420; clip-path: polygon(0 0, 100% 0, 100% 491px, 290px 491px, 290px 100%, 0 100%); }
.spine { width: 26px; display: flex; flex-direction: column; align-items: center; gap: 8px; padding: 2px 0; }
.spine button { height: 11px; }
.vert { writing-mode: vertical-rl; transform: rotate(180deg); flex: 1; font-size: 15px; line-height: 20px; text-align: left; padding-top: 4px; }
.sheet { flex: 1; display: flex; background: #eee; border: 1px solid #555; border-radius: 4px 0 0 4px; margin: 0 0 2px; padding: 5px 3px; }
.scroll { width: 10px; background: #b3b3b3; }
.thumb { height: 40%; background: linear-gradient(90deg, #ccc, #f0f0f0); border: 1px solid #bbb; }
.items { list-style: none; margin: 0; padding: 0; flex: 1; min-width: 0; }
.items li { height: 42px; display: flex; align-items: center; gap: 6px; padding-left: 12px; }
.items .head { height: 34px; padding-left: 4px; }
.ic { position: relative; flex: none; }
.ic .b { position: absolute; right: 0; bottom: 0; }
.vtabs { width: 20px; display: flex; flex-direction: column; }
.vtabs button { writing-mode: vertical-rl; transform: rotate(180deg); height: 53px; background: #c9c9c9; border: 1px solid #444; border-right: 0; border-bottom: 0; border-radius: 4px 0 0 0; }
.vtabs .on { background: #eee; }
.vtabs i { height: 4px; border: 1px solid #444; border-width: 0 1px 1px 1px; }
.watermark { position: absolute; right: 3px; bottom: 1px; font: 700 25px/28px "Liberation Sans", sans-serif; color: #333; opacity: .35; pointer-events: none; }
```
